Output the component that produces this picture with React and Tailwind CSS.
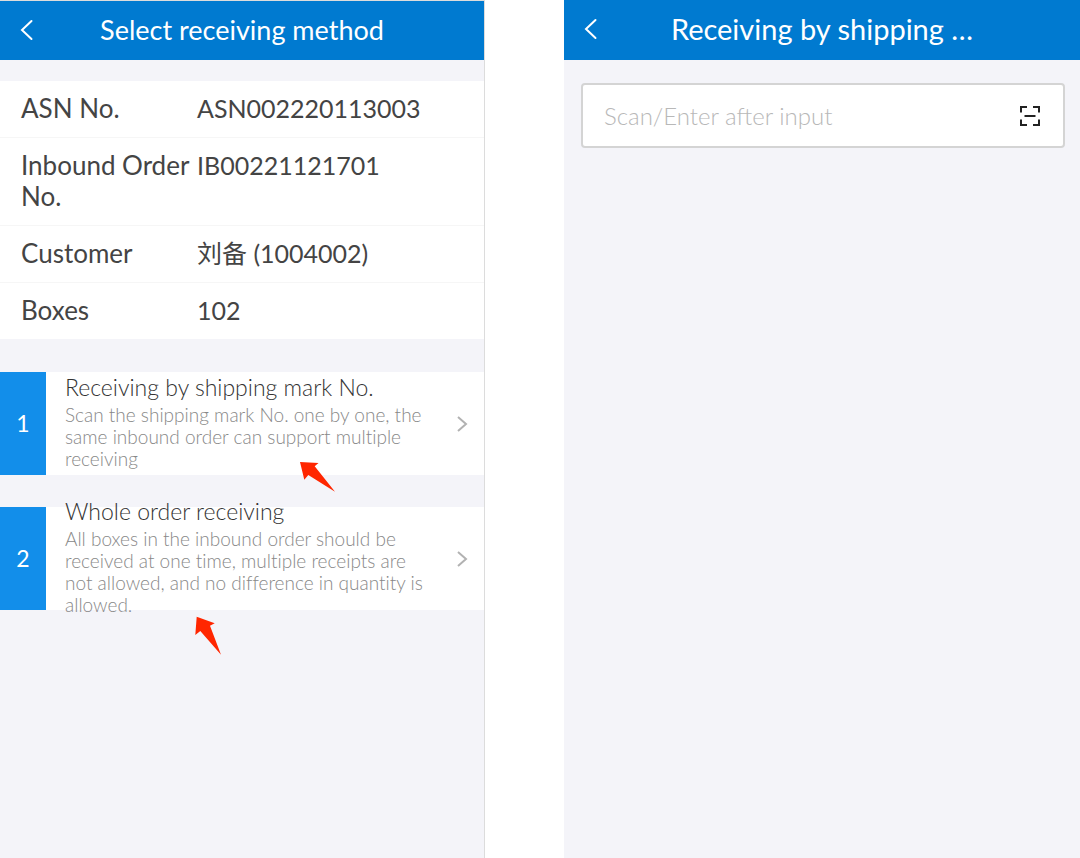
const orderRows = [
    { label: 'ASN No.', value: 'ASN002220113003' },
    { label: 'Inbound Order No.', value: 'IB00221121701' },
    { label: 'Customer', value: '刘备 (1004002)' },
    { label: 'Boxes', value: '102' },
];

const methods = [
    {
        id: 1,
        title: 'Receiving by shipping mark No.',
        description: 'Scan the shipping mark No. one by one, the same inbound order can support multiple receiving',
    },
    {
        id: 2,
        title: 'Whole order receiving',
        description: 'All boxes in the inbound order should be received at one time, multiple receipts are not allowed, and no difference in quantity is allowed.',
    },
];

function BackButton() {
    return (
        <button type="button" aria-label="Back" className="w-12 h-full shrink-0 flex items-center pl-5">
            <svg width="13" height="22" viewBox="0 0 13 22" fill="none" stroke="currentColor" strokeWidth="2" strokeLinecap="round">
                <path d="M11.500 2L2 11l9.500 9" />
            </svg>
        </button>
    );
}

function Header({ border = '', children }) {
    return (
        <header className={`h-[60px] pb-[2px] bg-[#007ad0] text-white flex items-center ${border}`}>
            <BackButton />
            {children}
            <div className="w-12 shrink-0" />
        </header>
    );
}

function MethodCard({ method, children }) {
    return (
        <div className="relative">
            <button type="button" className="w-full h-[103px] bg-white flex items-center text-left">
                <span className="w-[46px] h-full shrink-0 bg-[#128eea] text-white text-[23px] flex items-center justify-center">
                    {method.id}
                </span>
                <span className="flex-1 pl-[19px] pr-6 font-light [font-variant-ligatures:none]">
                    <span className="block text-[23px] leading-[20px] mb-[7px] text-[#333333]">{method.title}</span>
                    <span className="block text-[19px] leading-[22px] text-[#888888]">{method.description}</span>
                </span>
                <svg className="shrink-0 mr-4" width="12" height="18" viewBox="0 0 12 18" fill="none" stroke="#b2b2b2" strokeWidth="2">
                    <path d="M2 2l8 7-8 7" />
                </svg>
            </button>
            {children}
        </div>
    );
}

function SelectMethod() {
    return (
        <section className="bg-[#f4f4f9] border-r border-[#dcdcdc]">
            <Header border="border-t border-[#dcdcdc]">
                <h1 className="flex-1 text-center text-[27px] leading-10">Select receiving method</h1>
            </Header>

            <dl className="mt-[21px] bg-white leading-[31px] text-[#444444]">
                {orderRows.map((row) => (
                    <div key={row.label} className="flex pl-[21px] pt-3 pb-[13px] border-b border-[#f6f6f6] last:border-b-0">
                        <dt className="w-[176px] shrink-0 text-[26px]">{row.label}</dt>
                        <dd className="text-[25px]">{row.value}</dd>
                    </div>
                ))}
            </dl>

            <div className="mt-[33px] flex flex-col gap-8">
                <MethodCard method={methods[0]}>
                    <svg className="absolute left-[300px] top-[90px]" width="36" height="30" viewBox="0 0 36 30" fill="#ff2600">
                        <path d="M0 0L18.500 1 14.700 4.300 35 29.700 8.300 13 4.300 17.700z" />
                    </svg>
                </MethodCard>
                <MethodCard method={methods[1]}>
                    <svg className="absolute left-[195px] top-[109px]" width="28" height="40" viewBox="0 0 28 40" fill="#ff2600">
                        <path d="M1.700 0.700L19.700 7.300 15 9.700 26 38.700 5.300 15 0.300 19z" />
                    </svg>
                </MethodCard>
            </div>
        </section>
    );
}

function ScanMark() {
    return (
        <section className="bg-[#f4f4f9]">
            <Header>
                <h1 className="flex-1 text-center text-[29px] leading-10">Receiving by shipping …</h1>
            </Header>

            <div className="mt-[23px] ml-[17px] mr-[15px] h-[65px] bg-white border-2 border-[#d4d4d4] rounded flex items-center pl-[21px] pr-[22px]">
                <input
                    type="text"
                    aria-label="Shipping mark No."
                    placeholder="Scan/Enter after input"
                    className="flex-1 min-w-0 h-full text-[24px] font-light text-[#404040] placeholder:text-[#b8b8b8] outline-none"
                />
                <button type="button" aria-label="Scan" className="shrink-0">
                    <svg width="22" height="22" viewBox="0 0 22 22" fill="none" stroke="#222222" strokeWidth="2">
                        <path d="M2 7.500V2h6M14 2h6v5.500M20 14.500V20h-6M8 20H2v-5.500" />
                        <path d="M5.500 11h11" />
                    </svg>
                </button>
            </div>
        </section>
    );
}

function App() {
    return (
        <main className="min-h-screen bg-white grid grid-cols-[485fr_516fr] gap-x-[79px] font-['Lato','Noto_Sans_CJK_SC',sans-serif]">
            <SelectMethod />
            <ScanMark />
        </main>
    );
}

export default App;
